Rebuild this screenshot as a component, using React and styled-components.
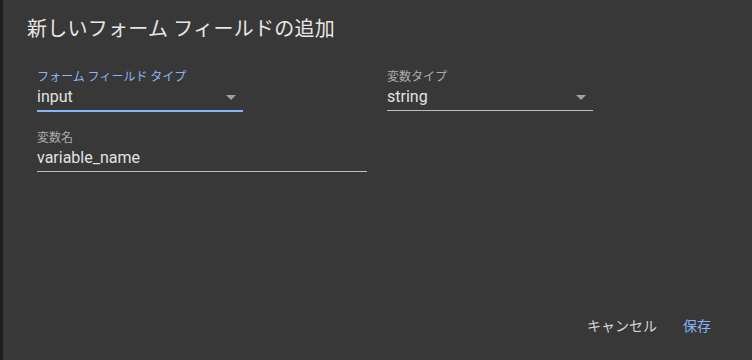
import React from "react";
import styled, { createGlobalStyle } from "styled-components";

const GlobalStyle = createGlobalStyle`
  html, body {
    margin: 0;
    padding: 0;
    background: #1e1e1e;
  }
  body {
    font-family: Roboto, "Noto Sans CJK JP", sans-serif;
  }
`;

const Page = styled.div`
  display: flex;
  height: 360px;
  padding-left: 3px;
  overflow: hidden;
`;

const Dialog = styled.div`
  flex: 1;
  display: flex;
  flex-direction: column;
  background: #383838;
  padding: 17px 0 17px 24px;
`;

const Title = styled.h2`
  margin: 0;
  font-family: Roboto, "Noto Sans CJK JP", sans-serif;
  font-weight: 400;
  font-size: 20px;
  line-height: 24px;
  letter-spacing: 0.25px;
  color: #e6e6e6;
`;

const Fields = styled.div`
  display: grid;
  grid-template-columns: 350px 350px;
  row-gap: 18px;
  align-items: start;
  margin-top: 28px;
  padding-left: 10px;
`;

const Field = styled.div`
  width: ${p => p.$width}px;
  display: flex;
  flex-direction: column;
  grid-column: ${p => p.$span ? "1 / span 2" : "auto"};
`;

const Label = styled.div`
  font-family: Roboto, "Noto Sans CJK JP", sans-serif;
  font-size: 12px;
  line-height: 16px;
  color: ${p => p.$focused ? "#8ab4f8" : "#ababab"};
  white-space: nowrap;
`;

const ValueRow = styled.div`
  display: flex;
  align-items: center;
  justify-content: space-between;
  padding-bottom: 1px;
  border-bottom: ${p => p.$focused ? "2px solid #8ab4f8" : "1px solid #bdbdbd"};
`;

const Value = styled.span`
  font-family: Roboto, sans-serif;
  font-size: 16px;
  line-height: 24px;
  color: #e2e2e2;
`;

const Arrow = styled.span`
  width: 0;
  height: 0;
  margin-right: 7px;
  margin-top: 1px;
  border-left: 5px solid transparent;
  border-right: 5px solid transparent;
  border-top: 5px solid #a0a0a0;
`;

const Footer = styled.div`
  margin-top: auto;
  display: flex;
  justify-content: flex-end;
  gap: 10px;
  padding-right: 33px;
`;

const TextButton = styled.button`
  height: 36px;
  padding: 0 8px;
  border: none;
  background: transparent;
  font-family: "Noto Sans CJK JP", sans-serif;
  font-size: 14px;
  color: ${p => p.$primary ? "#8ab4f8" : "#d6d6d6"};
  cursor: pointer;
`;

const FormField = ({ label, value, width, select, focused, span }) => (
  <Field $width={width} $span={span}>
    <Label $focused={focused}>{label}</Label>
    <ValueRow $focused={focused}>
      <Value>{value}</Value>
      {select && <Arrow />}
    </ValueRow>
  </Field>
);

export default function App() {
  return (
    <>
      <GlobalStyle />
      <Page>
        <Dialog>
          <Title>新しいフォーム フィールドの追加</Title>
          <Fields>
            <FormField label="フォーム フィールド タイプ" value="input" width={206} select focused />
            <FormField label="変数タイプ" value="string" width={206} select />
            <FormField label="変数名" value="variable_name" width={330} span />
          </Fields>
          <Footer>
            <TextButton>キャンセル</TextButton>
            <TextButton $primary>保存</TextButton>
          </Footer>
        </Dialog>
      </Page>
    </>
  );
}
